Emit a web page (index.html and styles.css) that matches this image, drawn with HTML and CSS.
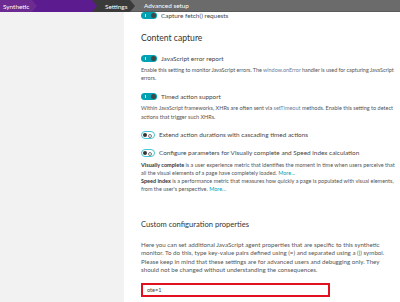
FILE: index.html
```html
<!DOCTYPE html>
<html lang="en">
<head>
  <meta charset="UTF-8">
  <meta name="viewport" content="width=device-width, initial-scale=1.0">
  <title>Advanced setup</title>
  <link rel="stylesheet" href="styles.css">
</head>
<body>
  <!-- Breadcrumbs -->
  <div class="crumbs">
    <a class="crumb crumb-app">Synthetic</a>
    <a class="crumb crumb-monitor"></a>
    <a class="crumb crumb-settings">Settings</a>
    <a class="crumb crumb-current">Advanced setup</a>
  </div>

  <div class="page">
    <aside class="side"></aside>

    <main class="content">
      <div class="row first">
        <span class="toggle on"></span>
        <span class="label">Capture fetch() requests</span>
      </div>

      <h2 class="title">Content capture</h2>

      <div class="setting">
        <div class="row">
          <span class="toggle on"></span>
          <span class="label">JavaScript error report</span>
        </div>
        <p class="desc tight">Enable this setting to monitor JavaScript errors. The <span class="code">window.onError</span> handler is used for capturing JavaScript errors.</p>
      </div>

      <div class="setting">
        <div class="row">
          <span class="toggle on"></span>
          <span class="label">Timed action support</span>
        </div>
        <p class="desc">Within JavaScript frameworks, XHRs are often sent via <span class="code">setTimeout</span> methods. Enable this setting to detect actions that trigger such XHRs.</p>
      </div>

      <div class="setting">
        <div class="row">
          <span class="toggle off"></span>
          <span class="label">Extend action durations with cascading timed actions</span>
        </div>
      </div>

      <div class="setting">
        <div class="row">
          <span class="toggle off"></span>
          <span class="label">Configure parameters for Visually complete and Speed index calculation</span>
        </div>
        <p class="desc"><b>Visually complete</b> is a user experience metric that identifies the moment in time when users perceive that all the visual elements of a page have completely loaded. <a class="more">More...</a><br>
        <b>Speed index</b> is a performance metric that measures how quickly a page is populated with visual elements, from the user's perspective. <a class="more">More...</a></p>
      </div>

      <h2 class="title small">Custom configuration properties</h2>

      <p class="para">Here you can set additional JavaScript agent properties that are specific to this synthetic monitor. To do this, type key-value pairs defined using (=) and separated using a (|) symbol. Please keep in mind that these settings are for advanced users and debugging only. They should not be changed without understanding the consequences.</p>

      <div class="field">ote=1</div>
    </main>
  </div>
</body>
</html>
```

FILE: styles.css
```css
/* General */
body {
  margin: 0;
  padding: 0;
  background: #ffffff;
  font-family: Lato, "Open Sans", sans-serif;
  color: #454646;
  height: 302px;
  overflow: hidden;
}

/* Breadcrumbs */
.crumbs {
  position: sticky;
  top: 0;
  z-index: 1;
  display: flex;
  height: 12px;
  background: #fff;
}

.crumb {
  display: flex;
  align-items: center;
  box-sizing: border-box;
  height: 100%;
  margin-left: -6px;
  color: #fff;
  font-size: 6.4px;
  clip-path: polygon(0 0, calc(100% - 5px) 0, 100% 50%, calc(100% - 5px) 100%, 0 100%, 5px 50%);
}

.crumb-app {
  width: 38px;
  margin-left: 0;
  padding-left: 3px;
  background: #6c2b91;
  clip-path: polygon(0 0, calc(100% - 5px) 0, 100% 50%, calc(100% - 5px) 100%, 0 100%);
}

.crumb-monitor {
  width: 66px;
  background: #5c1b8e;
}

.crumb-settings {
  width: 44px;
  padding-left: 13px;
  background: #3a3a3a;
}

.crumb-current {
  flex: 1;
  padding-left: 14px;
  background: #6b6b6b;
  border-bottom: 1px solid #5a5a5a;
  clip-path: polygon(0 0, 100% 0, 100% 100%, 0 100%, 5px 50%);
}

/* Page */
.page {
  display: flex;
  min-height: 290px;
}

.side {
  width: 124px;
  flex: none;
  background: #f2f2f2;
}

.content {
  flex: 1;
  padding: 0 4px 0 17px;
}

/* Toggle rows */
.row {
  display: flex;
  align-items: center;
  gap: 4px;
  height: 8px;
}

.row.first {
  margin-top: -1px;
}

.label {
  font-size: 6.4px;
  color: #454646;
  white-space: nowrap;
}

.toggle {
  position: relative;
  flex: none;
  box-sizing: border-box;
  border-radius: 4px;
}

.toggle.on {
  width: 16px;
  height: 7px;
  background: #00a1b2;
}

.toggle.on::before {
  content: "";
  position: absolute;
  left: 4px;
  top: 2px;
  width: 1px;
  height: 3px;
  background: #e6f7f8;
}

.toggle.on::after {
  content: "";
  position: absolute;
  right: 1px;
  top: 1px;
  width: 5px;
  height: 5px;
  border-radius: 50%;
  background: #454646;
}

.toggle.off {
  width: 14px;
  height: 8px;
  background: #fff;
  border: 1px solid #45c6d3;
}

.toggle.off::before {
  content: "";
  position: absolute;
  left: 1px;
  top: 1px;
  width: 4px;
  height: 4px;
  border-radius: 50%;
  background: #353535;
}

.toggle.off::after {
  content: "";
  position: absolute;
  right: 2px;
  top: 2px;
  width: 2px;
  height: 2px;
  border-radius: 50%;
  border: 0.6px solid #777;
}

/* Headings */
.title {
  margin: 14px 0 11px;
  font-size: 8.6px;
  line-height: 10px;
  font-weight: 400;
  color: #353535;
}

.title.small {
  font-size: 7.6px;
  margin: 25px 0 12px;
}

/* Settings */
.setting {
  margin-bottom: 10px;
}

.desc {
  margin: 4px 0 0;
  font-size: 5.5px;
  line-height: 8.2px;
  color: #555;
}

.desc.tight {
  letter-spacing: -0.06px;
}

.desc b {
  color: #353535;
}

.code {
  color: #6d7fa0;
}

.more {
  color: #00a1b2;
}

.para {
  margin: 0;
  font-size: 6.2px;
  line-height: 8.5px;
  color: #555;
}

/* Input */
.field {
  width: 189px;
  height: 14px;
  box-sizing: border-box;
  margin-top: 8px;
  padding-left: 4px;
  border: 2px solid #e1111f;
  font-size: 5.6px;
  line-height: 10px;
  color: #454646;
}
```
